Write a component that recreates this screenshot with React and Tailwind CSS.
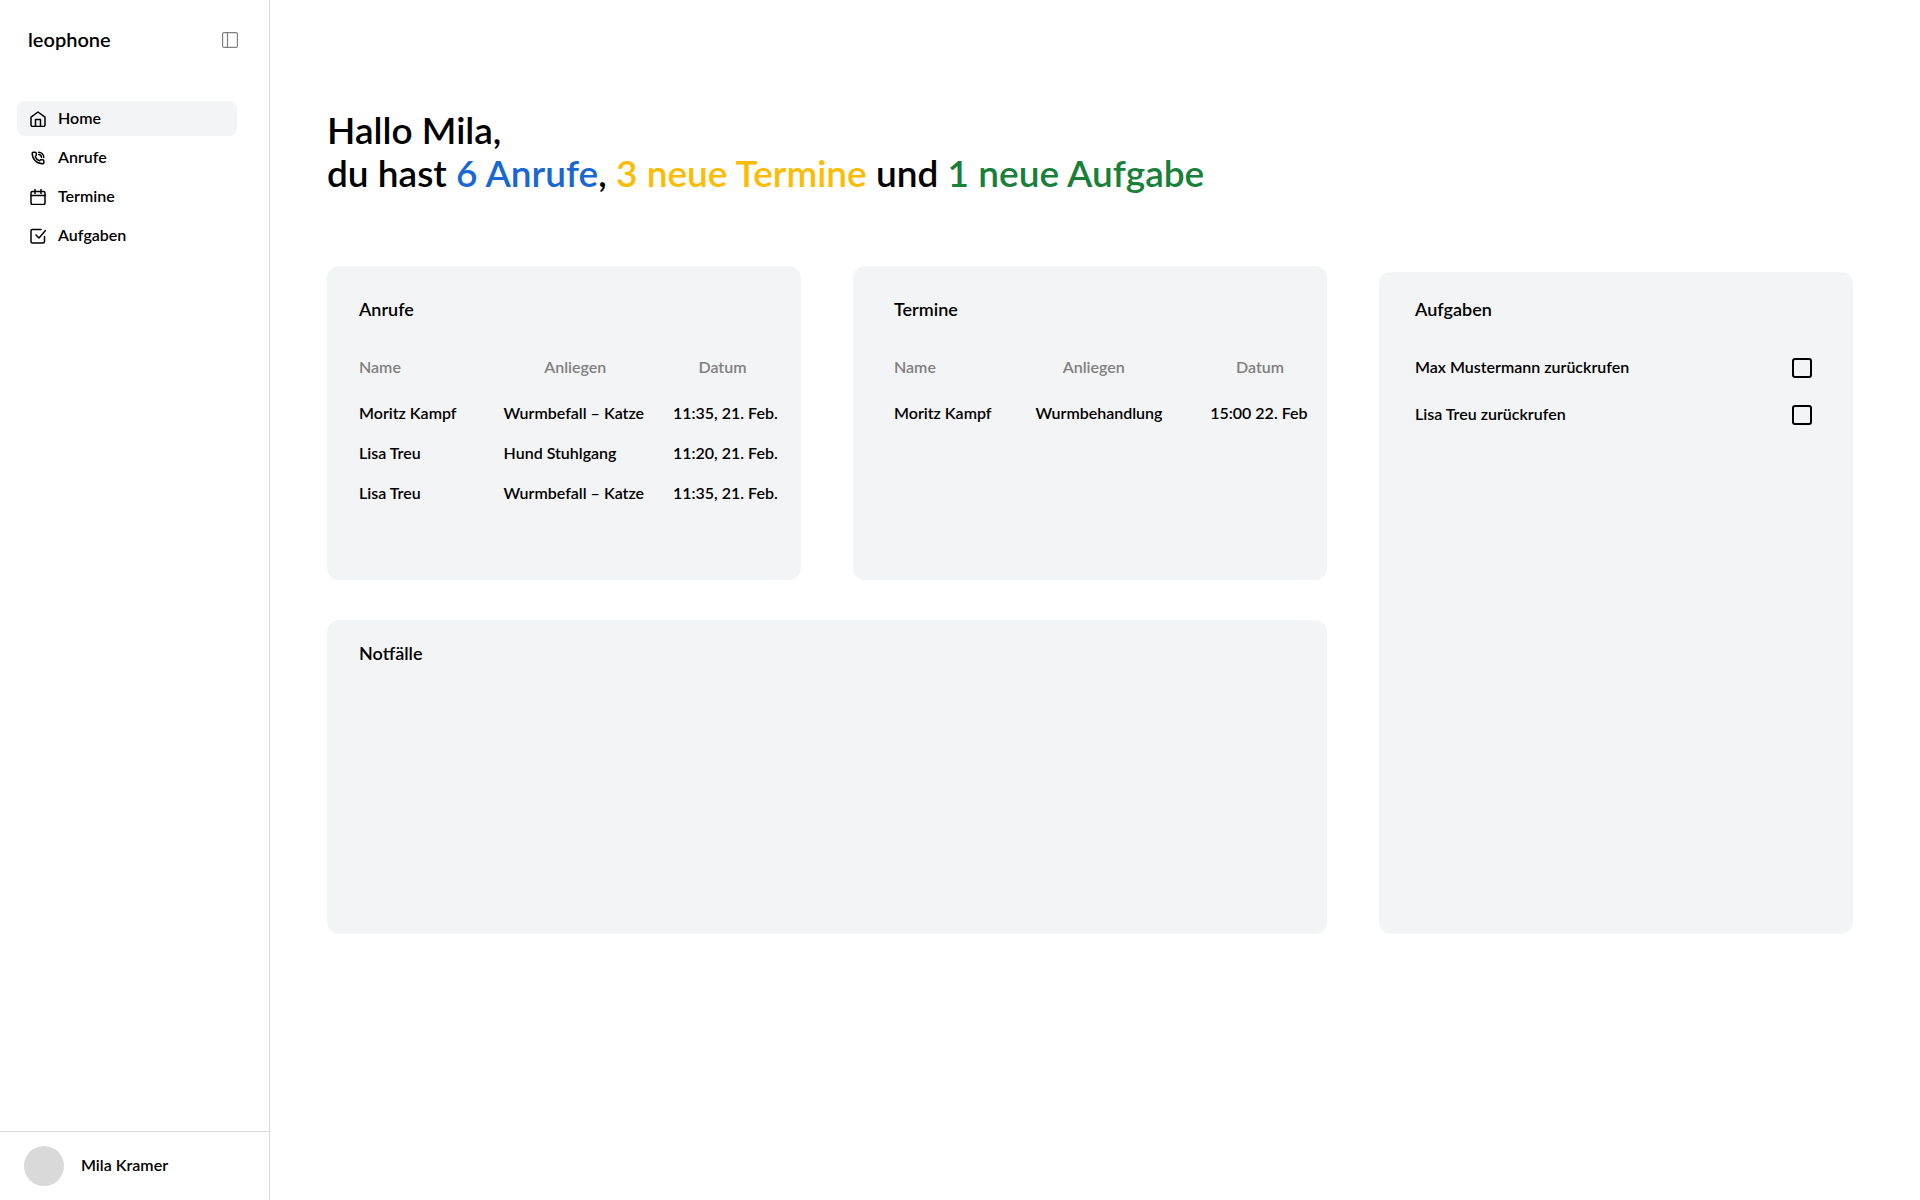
import React from "react";
import { PhoneCall } from "lucide-react";

const iconPaths = {
  home: (
    <>
      <path d="M1 6.200 8 1l7 5.200V14a1.500 1.500 0 0 1-1.500 1.500h-11A1.500 1.500 0 0 1 1 14z" />
      <path d="M5.500 15.500V8.500h5v7" />
    </>
  ),
  calendar: (
    <>
      <rect x="1" y="2.500" width="14" height="13" rx="1.500" />
      <path d="M1 6.500h14M5 .5v4M11 .5v4" />
    </>
  ),
  check: (
    <>
      <path d="M11 1.500H2.500A1.500 1.500 0 0 0 1 3v10.500A1.500 1.500 0 0 0 2.500 15H13a1.500 1.500 0 0 0 1.500-1.500V8.500" />
      <path d="m6 7 3 3 6.500-7.500" />
    </>
  ),
};

function NavIcon({ name }) {
  if (name === "phone") {
    return <PhoneCall className="size-4 p-px" strokeWidth={2.5} aria-hidden="true" />;
  }
  return (
    <svg viewBox="0 0 16 16" className="size-4" fill="none" stroke="currentColor" strokeWidth="1.5" strokeLinecap="round" strokeLinejoin="round" aria-hidden="true">
      {iconPaths[name]}
    </svg>
  );
}

const nav = [
  { label: "Home", icon: "home", active: true },
  { label: "Anrufe", icon: "phone" },
  { label: "Termine", icon: "calendar" },
  { label: "Aufgaben", icon: "check" },
];

const calls = [
  ["Moritz Kampf", "Wurmbefall – Katze", "11:35, 21. Feb."],
  ["Lisa Treu", "Hund Stuhlgang", "11:20, 21. Feb."],
  ["Lisa Treu", "Wurmbefall – Katze", "11:35, 21. Feb."],
];

const appointments = [["Moritz Kampf", "Wurmbehandlung", "15:00 22. Feb"]];
const tasks = ["Max Mustermann zurückrufen", "Lisa Treu zurückrufen"];

function Entries({ rows, label, nameWidth, subjectPadding }) {
  return (
    <table className="mt-7 w-full table-fixed text-left whitespace-nowrap" aria-label={label}>
      <colgroup>
        <col className={nameWidth} />
        <col />
        <col className="w-[24%]" />
      </colgroup>
      <thead>
        <tr className="h-12 align-top leading-8 text-[#808080]">
          <th scope="col" className="font-semibold">Name</th>
          <th scope="col" className={"text-center font-semibold " + subjectPadding}>Anliegen</th>
          <th scope="col" className="text-center font-semibold">Datum</th>
        </tr>
      </thead>
      <tbody>
        {rows.map((row, i) => (
          <tr key={i} className="h-10 align-top leading-7">
            {row.map((cell, j) => (
              <td key={j}>{cell}</td>
            ))}
          </tr>
        ))}
      </tbody>
    </table>
  );
}

export default function App() {
  return (
    <div className="flex min-h-screen bg-white font-['Lato',sans-serif] text-base font-semibold text-black">
      <aside className="flex w-[270px] shrink-0 flex-col border-r border-[#d9d9d9]">
        <div className="flex items-center justify-between pt-6 pr-[31px] pl-7">
          <a href="#" className="pb-0.5 text-xl leading-[30px]">leophone</a>
          <button type="button" aria-label="Seitenleiste umschalten" className="text-[#808080]">
            <svg viewBox="0 0 16 16" className="size-4" fill="none" stroke="currentColor" strokeWidth="1.2" aria-hidden="true">
              <rect x=".6" y=".6" width="14.800" height="14.800" rx="1.500" />
              <path d="M5.500.5v15" />
            </svg>
          </button>
        </div>
        <nav className="mt-[45px] flex flex-col gap-1 pr-8 pl-[17px]">
          {nav.map((item) => (
            <a
              key={item.label}
              href="#"
              aria-current={item.active ? "page" : undefined}
              className={"flex h-[35px] items-center gap-3 rounded-lg pl-[13px] " + (item.active ? "bg-[#f3f4f6]" : "")}
            >
              <NavIcon name={item.icon} />
              <span className="pb-0.5">{item.label}</span>
            </a>
          ))}
        </nav>
        <div className="mt-auto flex items-center gap-[17px] border-t border-[#d9d9d9] pt-[14px] pb-[14px] pl-6">
          <div className="size-10 rounded-full bg-[#d9d9d9]" />
          <span className="pb-0.5">Mila Kramer</span>
        </div>
      </aside>

      <main className="min-w-0 flex-1 pt-[108px] pr-[67px] pl-[57px]">
        <h1 className="text-[37px] leading-[43px]">
          Hallo Mila,
          <br />
          du hast <span className="text-[#1967d2]">6 Anrufe</span>, <span className="text-[#fbbc04]">3 neue Termine</span> und{" "}
          <span className="text-[#188038]">1 neue Aufgabe</span>
        </h1>

        <div className="mt-[72px] grid grid-cols-3 gap-x-[52px] gap-y-10">
          <section className="min-h-[314px] rounded-xl bg-[#f3f4f6] pt-[29px] pr-[29px] pl-8">
            <h2 className="text-lg leading-7">Anrufe</h2>
            <Entries rows={calls} label="Anrufe" nameWidth="w-[35%]" subjectPadding="pr-[26px]" />
          </section>

          <section className="min-h-[314px] rounded-xl bg-[#f3f4f6] pt-[29px] pr-[17px] pl-[41px]">
            <h2 className="text-lg leading-7">Termine</h2>
            <Entries rows={appointments} label="Termine" nameWidth="w-[34%]" subjectPadding="pr-[58px]" />
          </section>

          <section className="row-span-2 mt-[6px] rounded-xl bg-[#f3f4f6] pt-[23px] pr-[41px] pl-9">
            <h2 className="text-lg leading-7">Aufgaben</h2>
            <ul className="mt-[33px] flex flex-col gap-[23px]">
              {tasks.map((task) => (
                <li key={task}>
                  <label className="flex items-center justify-between">
                    <span className="pb-0.5 leading-[22px]">{task}</span>
                    <input type="checkbox" className="size-5 appearance-none rounded-[3px] border-2 border-black checked:bg-black" />
                  </label>
                </li>
              ))}
            </ul>
          </section>

          <section className="col-span-2 min-h-[314px] rounded-xl bg-[#f3f4f6] pt-[19px] pl-8">
            <h2 className="text-lg leading-7">Notfälle</h2>
          </section>
        </div>
      </main>
    </div>
  );
}
